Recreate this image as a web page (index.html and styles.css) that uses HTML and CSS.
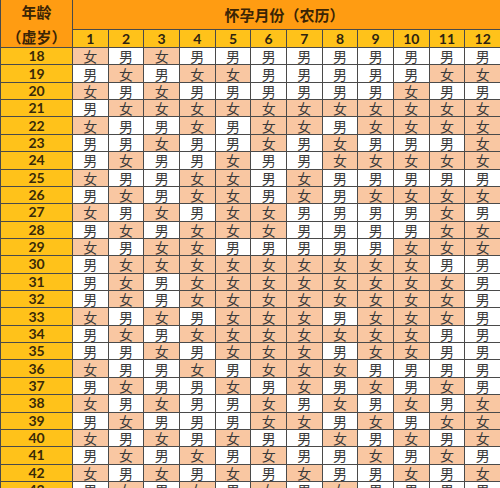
FILE: index.html
```html
<!DOCTYPE html>
<html lang="zh">
<head>
<meta charset="utf-8">
<title>清宫图</title>
<link rel="stylesheet" href="styles.css">
</head>
<body>
<div class="grid">
<div class="corner"><span>年龄</span><span>（虚岁）</span></div>
<div class="title">怀孕月份（农历）</div>
<div class="mo">1</div><div class="mo">2</div><div class="mo">3</div><div class="mo">4</div><div class="mo">5</div><div class="mo">6</div><div class="mo">7</div><div class="mo">8</div><div class="mo">9</div><div class="mo">10</div><div class="mo">11</div><div class="mo">12</div>

<div class="age">18</div><div class="f">女</div><div class="m">男</div><div class="f">女</div><div class="m">男</div><div class="m">男</div><div class="m">男</div><div class="m">男</div><div class="m">男</div><div class="m">男</div><div class="m">男</div><div class="m">男</div><div class="m">男</div>
<div class="age">19</div><div class="m">男</div><div class="f">女</div><div class="m">男</div><div class="f">女</div><div class="f">女</div><div class="m">男</div><div class="m">男</div><div class="m">男</div><div class="m">男</div><div class="m">男</div><div class="f">女</div><div class="f">女</div>
<div class="age">20</div><div class="f">女</div><div class="m">男</div><div class="f">女</div><div class="m">男</div><div class="m">男</div><div class="m">男</div><div class="m">男</div><div class="m">男</div><div class="m">男</div><div class="f">女</div><div class="m">男</div><div class="m">男</div>
<div class="age">21</div><div class="m">男</div><div class="f">女</div><div class="f">女</div><div class="f">女</div><div class="f">女</div><div class="f">女</div><div class="f">女</div><div class="f">女</div><div class="f">女</div><div class="f">女</div><div class="f">女</div><div class="f">女</div>
<div class="age">22</div><div class="f">女</div><div class="m">男</div><div class="m">男</div><div class="f">女</div><div class="m">男</div><div class="f">女</div><div class="f">女</div><div class="m">男</div><div class="f">女</div><div class="f">女</div><div class="f">女</div><div class="f">女</div>
<div class="age">23</div><div class="m">男</div><div class="m">男</div><div class="f">女</div><div class="m">男</div><div class="m">男</div><div class="f">女</div><div class="m">男</div><div class="f">女</div><div class="m">男</div><div class="m">男</div><div class="m">男</div><div class="f">女</div>
<div class="age">24</div><div class="m">男</div><div class="f">女</div><div class="m">男</div><div class="m">男</div><div class="f">女</div><div class="m">男</div><div class="m">男</div><div class="f">女</div><div class="f">女</div><div class="f">女</div><div class="f">女</div><div class="f">女</div>
<div class="age">25</div><div class="f">女</div><div class="m">男</div><div class="m">男</div><div class="f">女</div><div class="f">女</div><div class="m">男</div><div class="f">女</div><div class="m">男</div><div class="m">男</div><div class="m">男</div><div class="m">男</div><div class="m">男</div>
<div class="age">26</div><div class="m">男</div><div class="f">女</div><div class="m">男</div><div class="f">女</div><div class="f">女</div><div class="m">男</div><div class="f">女</div><div class="m">男</div><div class="f">女</div><div class="f">女</div><div class="f">女</div><div class="f">女</div>
<div class="age">27</div><div class="f">女</div><div class="m">男</div><div class="f">女</div><div class="m">男</div><div class="f">女</div><div class="f">女</div><div class="m">男</div><div class="m">男</div><div class="m">男</div><div class="m">男</div><div class="f">女</div><div class="m">男</div>
<div class="age">28</div><div class="m">男</div><div class="f">女</div><div class="m">男</div><div class="f">女</div><div class="f">女</div><div class="f">女</div><div class="m">男</div><div class="m">男</div><div class="m">男</div><div class="m">男</div><div class="f">女</div><div class="f">女</div>
<div class="age">29</div><div class="f">女</div><div class="m">男</div><div class="f">女</div><div class="f">女</div><div class="m">男</div><div class="m">男</div><div class="m">男</div><div class="m">男</div><div class="m">男</div><div class="f">女</div><div class="f">女</div><div class="f">女</div>
<div class="age">30</div><div class="m">男</div><div class="f">女</div><div class="f">女</div><div class="f">女</div><div class="f">女</div><div class="f">女</div><div class="f">女</div><div class="f">女</div><div class="f">女</div><div class="f">女</div><div class="m">男</div><div class="m">男</div>
<div class="age">31</div><div class="m">男</div><div class="f">女</div><div class="m">男</div><div class="f">女</div><div class="f">女</div><div class="f">女</div><div class="f">女</div><div class="f">女</div><div class="f">女</div><div class="f">女</div><div class="f">女</div><div class="m">男</div>
<div class="age">32</div><div class="m">男</div><div class="f">女</div><div class="m">男</div><div class="f">女</div><div class="f">女</div><div class="f">女</div><div class="f">女</div><div class="f">女</div><div class="f">女</div><div class="f">女</div><div class="f">女</div><div class="m">男</div>
<div class="age">33</div><div class="f">女</div><div class="m">男</div><div class="f">女</div><div class="m">男</div><div class="f">女</div><div class="f">女</div><div class="f">女</div><div class="m">男</div><div class="f">女</div><div class="f">女</div><div class="f">女</div><div class="m">男</div>
<div class="age">34</div><div class="m">男</div><div class="f">女</div><div class="m">男</div><div class="f">女</div><div class="f">女</div><div class="f">女</div><div class="f">女</div><div class="f">女</div><div class="f">女</div><div class="f">女</div><div class="m">男</div><div class="m">男</div>
<div class="age">35</div><div class="m">男</div><div class="m">男</div><div class="f">女</div><div class="m">男</div><div class="f">女</div><div class="f">女</div><div class="f">女</div><div class="m">男</div><div class="f">女</div><div class="f">女</div><div class="m">男</div><div class="m">男</div>
<div class="age">36</div><div class="f">女</div><div class="m">男</div><div class="m">男</div><div class="f">女</div><div class="m">男</div><div class="f">女</div><div class="f">女</div><div class="f">女</div><div class="m">男</div><div class="m">男</div><div class="m">男</div><div class="m">男</div>
<div class="age">37</div><div class="m">男</div><div class="f">女</div><div class="m">男</div><div class="m">男</div><div class="f">女</div><div class="m">男</div><div class="f">女</div><div class="m">男</div><div class="f">女</div><div class="m">男</div><div class="f">女</div><div class="m">男</div>
<div class="age">38</div><div class="f">女</div><div class="m">男</div><div class="f">女</div><div class="m">男</div><div class="m">男</div><div class="f">女</div><div class="m">男</div><div class="f">女</div><div class="m">男</div><div class="f">女</div><div class="m">男</div><div class="f">女</div>
<div class="age">39</div><div class="m">男</div><div class="f">女</div><div class="m">男</div><div class="m">男</div><div class="m">男</div><div class="f">女</div><div class="f">女</div><div class="m">男</div><div class="f">女</div><div class="m">男</div><div class="f">女</div><div class="f">女</div>
<div class="age">40</div><div class="f">女</div><div class="m">男</div><div class="f">女</div><div class="m">男</div><div class="f">女</div><div class="m">男</div><div class="m">男</div><div class="f">女</div><div class="m">男</div><div class="f">女</div><div class="m">男</div><div class="f">女</div>
<div class="age">41</div><div class="m">男</div><div class="f">女</div><div class="m">男</div><div class="f">女</div><div class="m">男</div><div class="f">女</div><div class="m">男</div><div class="m">男</div><div class="f">女</div><div class="m">男</div><div class="f">女</div><div class="m">男</div>
<div class="age">42</div><div class="f">女</div><div class="m">男</div><div class="f">女</div><div class="m">男</div><div class="f">女</div><div class="m">男</div><div class="f">女</div><div class="m">男</div><div class="m">男</div><div class="f">女</div><div class="m">男</div><div class="f">女</div>
<div class="age">43</div><div class="m">男</div><div class="f">女</div><div class="m">男</div><div class="f">女</div><div class="m">男</div><div class="f">女</div><div class="m">男</div><div class="f">女</div><div class="m">男</div><div class="m">男</div><div class="m">男</div><div class="m">男</div>
</div>
</body>
</html>
```

FILE: styles.css
```css
html, body {
  margin: 0;
  padding: 0;
  background: #ffffff;
}
body {
  width: 500px;
  height: 488px;
  overflow: hidden;
  font-family: "Noto Sans CJK SC", "Noto Sans", sans-serif;
}
.grid {
  display: grid;
  width: 500px;
  box-sizing: border-box;
  border-left: 1px solid #4a4a4a;
  grid-template-columns: 71px repeat(12, 1fr);
  grid-template-rows: 29px 17px;
  grid-auto-rows: 16.36px;
  gap: 1px;
  background: #4a4a4a;
}
.grid > div {
  display: flex;
  align-items: center;
  justify-content: center;
  line-height: 1;
}
.corner {
  grid-row: 1 / span 2;
  background: #ff9c12;
  color: #3a2405;
  font-weight: 700;
  font-size: 15px;
  text-align: center;
  flex-direction: column;
  gap: 10px;
}
.title {
  grid-column: 2 / span 12;
  background: #ff9c12;
  color: #3a2405;
  font-weight: 700;
  font-size: 15px;
  padding-right: 4px;
}
.mo {
  background: #ffc21a;
  color: #2e2410;
  font-family: Lato, "Liberation Sans", sans-serif;
  font-weight: 700;
  font-size: 14px;
}
.age {
  background: #ffc21a;
  color: #3a2a08;
  font-family: Lato, "Liberation Sans", sans-serif;
  font-weight: 700;
  font-size: 14px;
}
.f, .m {
  font-size: 14px;
  color: #3a3a3a;
}
.f {
  background: #f9c7a2;
}
.m {
  background: #ffffff;
}
```
